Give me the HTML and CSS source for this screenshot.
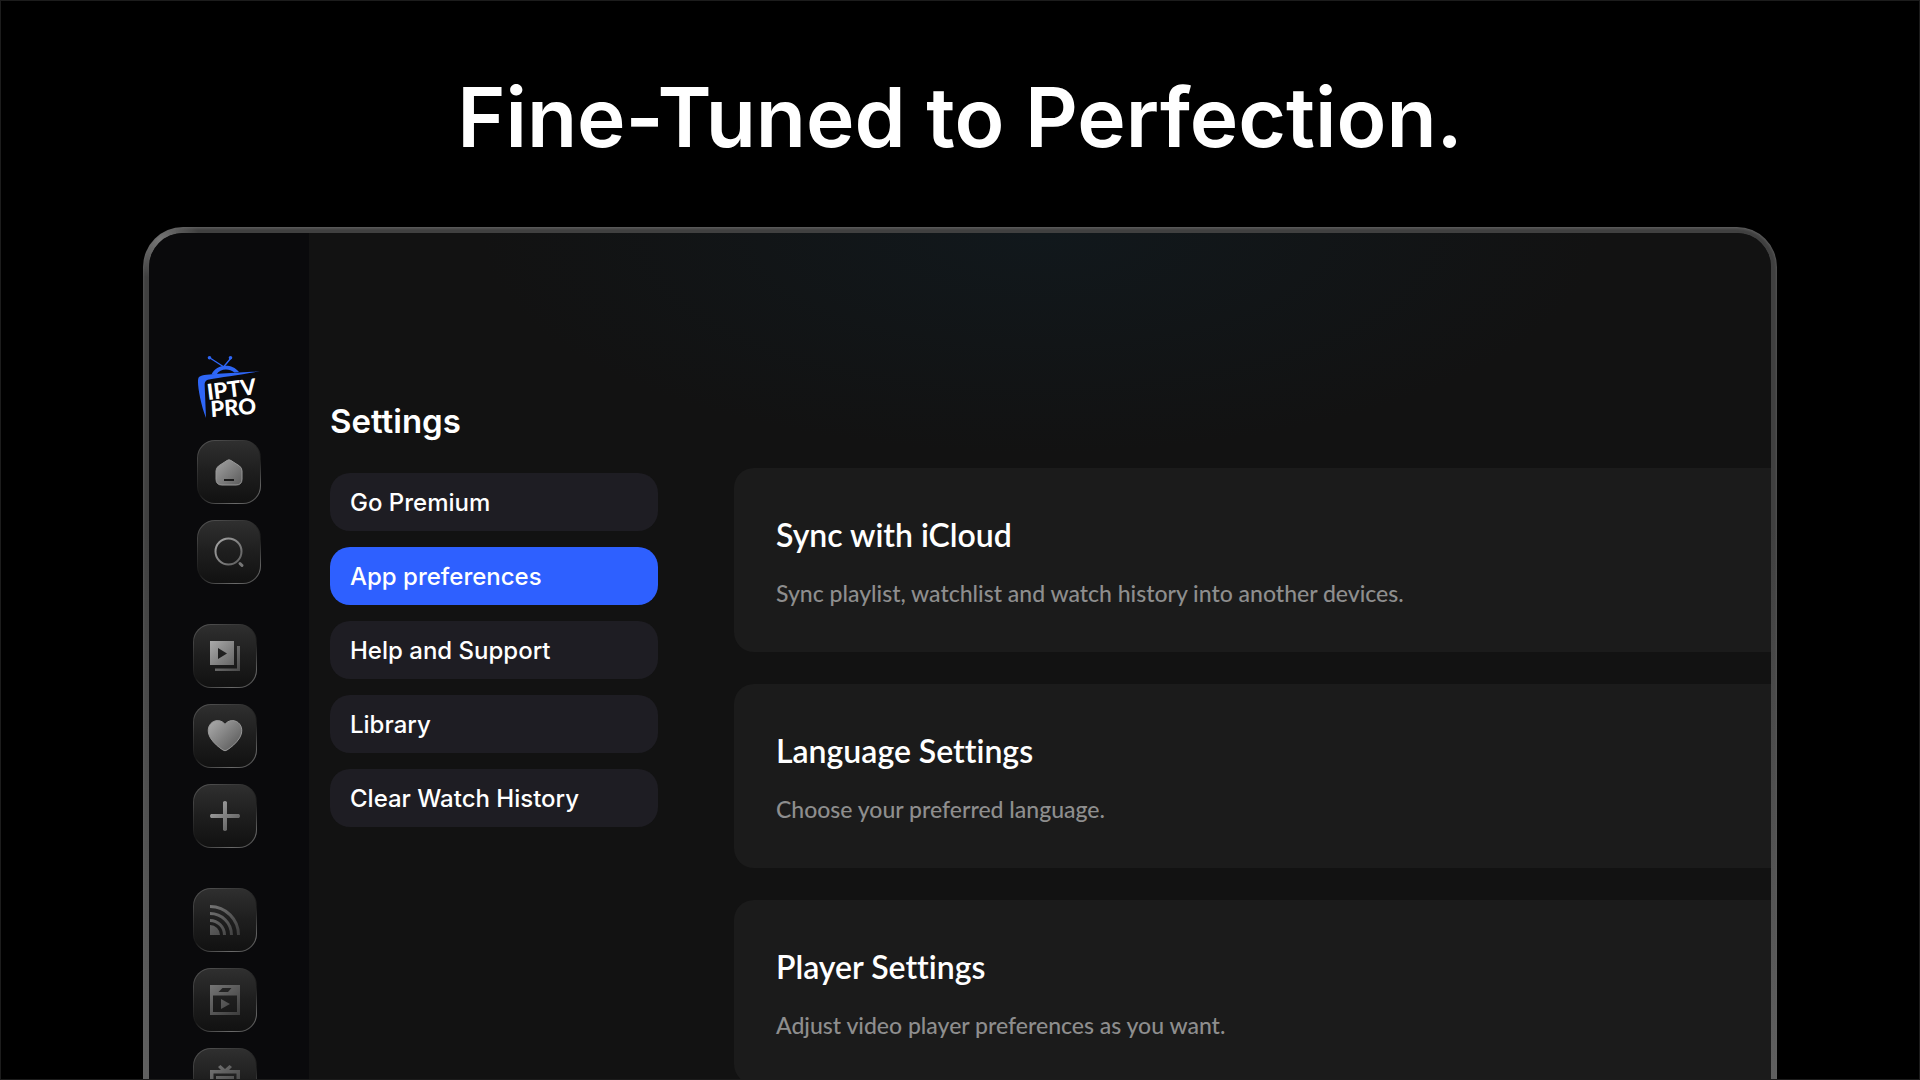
FILE: index.html
```
<!DOCTYPE html>
<html lang="en">
<head>
    <meta charset="UTF-8">
    <meta name="viewport" content="width=device-width, initial-scale=1.0">
    <title>IPTV Pro - Settings</title>
    <link rel="stylesheet" href="styles.css">
</head>
<body>

    <header class="hero">
        <h1>Fine-Tuned to Perfection.</h1>
    </header>

    <div class="device">
        <div class="screen">

            <nav class="sidebar" aria-label="Main">
                <svg class="logo" viewBox="0 0 64 64" role="img" aria-label="IPTV Pro">
                    <path d="M12 3 26 12M33 3 25.500 12" fill="none" stroke="#2e66f6" stroke-width="1.4"/>
                    <circle cx="11.500" cy="2.800" r="1.800" fill="#2e66f6"/>
                    <circle cx="32.500" cy="2.800" r="1.800" fill="#2e66f6"/>
                    <path d="M13.500 19.500C18 9.500 33 7.500 41 17L36.500 17.500C31 13 22 13.500 18.500 19.500Z" fill="#2e66f6"/>
                    <path d="M1 22C4 19.500 12 19.500 20 18.800L62 16.300C44 19.500 22 22.500 11 24.500C7 25.500 6.500 27.500 6.700 31L8 63C3 50 0 34 0 27C0 25 0 23 1 22Z" fill="#2e66f6"/>
                    <text class="logo-text" x="10" y="45" transform="rotate(-7 10 45)">IPTV</text>
                    <text class="logo-text" x="13" y="62" transform="rotate(-4 13 62)">PRO</text>
                </svg>

                <ul class="nav-group nav-top">
                    <li><button class="nav-button" type="button" aria-label="Home">
                        <svg viewBox="0 0 64 64">
                            <path class="solid edge" d="M30 20.500Q32 19 34 20.500L42.500 26Q45 28 45 31V39Q45 45 39 45H25Q19 45 19 39V31Q19 28 21.500 26Z"/>
                            <path class="hole" d="M27 39H37V41H27Z"/>
                        </svg>
                    </button></li>
                    <li><button class="nav-button" type="button" aria-label="Search">
                        <svg viewBox="0 0 64 64">
                            <circle class="line" cx="31.500" cy="31.500" r="13"/>
                            <path class="handle" d="M43 43.500 45 45.500"/>
                        </svg>
                    </button></li>
                </ul>

                <ul class="nav-group">
                    <li><button class="nav-button" type="button" aria-label="Library">
                        <svg viewBox="0 0 64 64">
                            <path class="solid" fill-rule="evenodd" d="M17 17H41V41H17ZM25 24V35L34 29.500Z"/>
                            <path class="solid dim" d="M44 22H47V47H22V44.500H44Z"/>
                        </svg>
                    </button></li>
                    <li><button class="nav-button" type="button" aria-label="Favourites">
                        <svg viewBox="0 0 64 64">
                            <path class="solid edge" d="M32 20.500C35 16 41 15.500 45 18.500C50 22.500 49.500 29 46.500 34C43.500 39 38 43.500 34 46Q32 47.500 30 46C26 43.500 20.500 39 17.500 34C14.500 29 14 22.500 19 18.500C23 15.500 29 16 32 20.500Z"/>
                        </svg>
                    </button></li>
                    <li><button class="nav-button" type="button" aria-label="Add">
                        <svg viewBox="0 0 64 64">
                            <path class="solid" d="M30 18Q32 16 34 18V30H46Q48 32 46 34H34V46Q32 48 30 46V34H18Q16 32 18 30H30Z"/>
                        </svg>
                    </button></li>
                </ul>

                <ul class="nav-group nav-faded">
                    <li><button class="nav-button" type="button" aria-label="Feeds">
                        <svg viewBox="0 0 64 64">
                            <path class="solid" d="M17 37A10 10 0 0 1 27 47H17Z"/>
                            <path class="line thick" d="M17 32.500A14.500 14.500 0 0 1 31.500 47M17 25.500A21.500 21.500 0 0 1 38.500 47M17 18.500A28.500 28.500 0 0 1 45.500 47"/>
                        </svg>
                    </button></li>
                    <li><button class="nav-button" type="button" aria-label="Movies">
                        <svg viewBox="0 0 64 64">
                            <path class="solid" fill-rule="evenodd" d="M17 17H47V47H17ZM25.500 24H35L38.500 20H29.500ZM20 27.500V44H44V27.500Z"/>
                            <path class="solid" d="M28 31V41L37 36Z"/>
                        </svg>
                    </button></li>
                    <li><button class="nav-button" type="button" aria-label="Live TV">
                        <svg viewBox="0 0 64 64">
                            <path class="solid" fill-rule="evenodd" d="M17 22H28L25 19 27.500 17 32 21 36.500 17 39 19 36 22H47V47H17ZM20.500 25.500V43.500H43.500V25.500Z"/>
                            <path class="solid" d="M23 28H41V41H23Z"/>
                        </svg>
                    </button></li>
                </ul>
            </nav>

            <main class="content">
                <section class="settings">
                    <h2>Settings</h2>
                    <button class="menu-item" type="button">Go Premium</button>
                    <button class="menu-item active" type="button">App preferences</button>
                    <button class="menu-item" type="button">Help and Support</button>
                    <button class="menu-item" type="button">Library</button>
                    <button class="menu-item" type="button">Clear Watch History</button>
                </section>

                <section class="cards">
                    <article class="card">
                        <h3>Sync with iCloud</h3>
                        <p>Sync playlist, watchlist and watch history into another devices.</p>
                    </article>
                    <article class="card">
                        <h3>Language Settings</h3>
                        <p>Choose your preferred language.</p>
                    </article>
                    <article class="card">
                        <h3>Player Settings</h3>
                        <p>Adjust video player preferences as you want.</p>
                    </article>
                </section>
            </main>

        </div>
    </div>

    <!-- Shared gradients for the sidebar icons -->
    <svg class="defs" aria-hidden="true">
        <defs>
            <linearGradient id="metal" gradientUnits="userSpaceOnUse" x1="17" y1="17" x2="47" y2="47">
                <stop offset="0" stop-color="#aaaaaa"/>
                <stop offset="1" stop-color="#555555"/>
            </linearGradient>
        </defs>
    </svg>

</body>
</html>
```
FILE: styles.css
```
* {
    box-sizing: border-box;
    margin: 0;
    padding: 0;
}

body {
    display: flex;
    flex-direction: column;
    height: 100vh;
    overflow: hidden;
    background-color: #000;
    border: 1px solid #1c1c1c;
    color: #fff;
    font-family: Inter, 'Liberation Sans', sans-serif;
}

button {
    border: none;
    color: inherit;
    font-family: inherit;
    cursor: pointer;
}

.hero {
    display: flex;
    flex: none;
    align-items: center;
    justify-content: center;
    height: 226px;
    padding-top: 8px;
}

h1 {
    font-size: 82px;
    font-weight: 600;
    line-height: 1.2;
}

/* Device frame, runs off the bottom of the page */
.device {
    flex: 1;
    min-height: 0;
    margin: 0 142px;
    padding: 6px 6px 0;
    border-radius: 40px 40px 0 0;
    background:
        radial-gradient(circle at 16px 12px, #777, transparent 40px),
        linear-gradient(#404040 35%, #606060);
    box-shadow: inset 0 1px 3px #666;
    overflow: hidden;
}

.screen {
    display: flex;
    height: 100%;
    border-radius: 34px 34px 0 0;
    background-color: #121212;
    overflow: hidden;
}

.sidebar {
    flex: none;
    width: 160px;
    padding: 122px 44px 0;
    background-color: #0a0a0c;
}

.logo {
    display: block;
    width: 64px;
    height: 64px;
    margin-left: 5px;
    overflow: visible;
}

.logo-text {
    fill: #fff;
    font-family: Lato, sans-serif;
    font-size: 22px;
    font-weight: 900;
}

.nav-group {
    display: flex;
    flex-direction: column;
    gap: 16px;
    margin-bottom: 40px;
    list-style: none;
}

.nav-top {
    margin-top: 21px;
    margin-left: 4px;
}

.nav-button {
    display: block;
    width: 64px;
    height: 64px;
    border: 1px solid transparent;
    border-radius: 18px;
    background:
        linear-gradient(#2f2f2f, #1e1e1e 50%, #111) padding-box,
        linear-gradient(150deg, #5a5a5a, #333 30%, #181818 55%, #6a6a6a 85%, #3a3a3a) border-box;
}

.nav-button svg {
    display: block;
    width: 64px;
    height: 64px;
    margin: -1px;
}

.nav-faded svg {
    opacity: 0.6;
}

.solid {
    fill: url(#metal);
}

.edge {
    stroke: #999;
    stroke-width: 1;
}

.hole {
    fill: #1a1a1a;
}

.dim {
    opacity: 0.8;
}

.line {
    fill: none;
    stroke: url(#metal);
    stroke-width: 2;
}

.handle {
    fill: none;
    stroke: #777;
    stroke-width: 3;
    stroke-linecap: round;
}

.thick {
    stroke-width: 3;
}

.defs {
    position: absolute;
    width: 0;
    height: 0;
}

.content {
    display: flex;
    flex: 1;
    min-width: 0;
    padding-left: 21px;
    background: radial-gradient(ellipse 560px 220px at 50% 0, #11181c, #121212);
}

.settings {
    display: flex;
    flex: none;
    flex-direction: column;
    gap: 16px;
    width: 328px;
    padding-top: 168px;
}

h2 {
    margin-bottom: 16px;
    font-size: 33px;
    font-weight: 600;
    line-height: 40px;
}

.menu-item {
    height: 58px;
    padding: 0 20px;
    border-radius: 20px;
    background-color: #1e1d23;
    font-size: 24px;
    font-weight: 500;
    text-align: left;
}

.menu-item.active {
    background-color: #2e60ff;
}

.cards {
    display: flex;
    flex: 1;
    flex-direction: column;
    gap: 32px;
    min-width: 0;
    margin-left: 76px;
    padding-top: 235px;
}

/* Cards continue past the right edge of the screen */
.card {
    flex: none;
    height: 184px;
    padding: 45px 42px;
    border-radius: 20px 0 0 20px;
    background-color: #1b1b1b;
    font-family: Lato, sans-serif;
    font-variant-ligatures: none;
}

h3 {
    margin-bottom: 20px;
    font-size: 32px;
    font-weight: 600;
    line-height: 44px;
}

.card p {
    color: #8e8e8e;
    font-size: 23px;
    font-weight: 500;
    line-height: 32px;
}
```
